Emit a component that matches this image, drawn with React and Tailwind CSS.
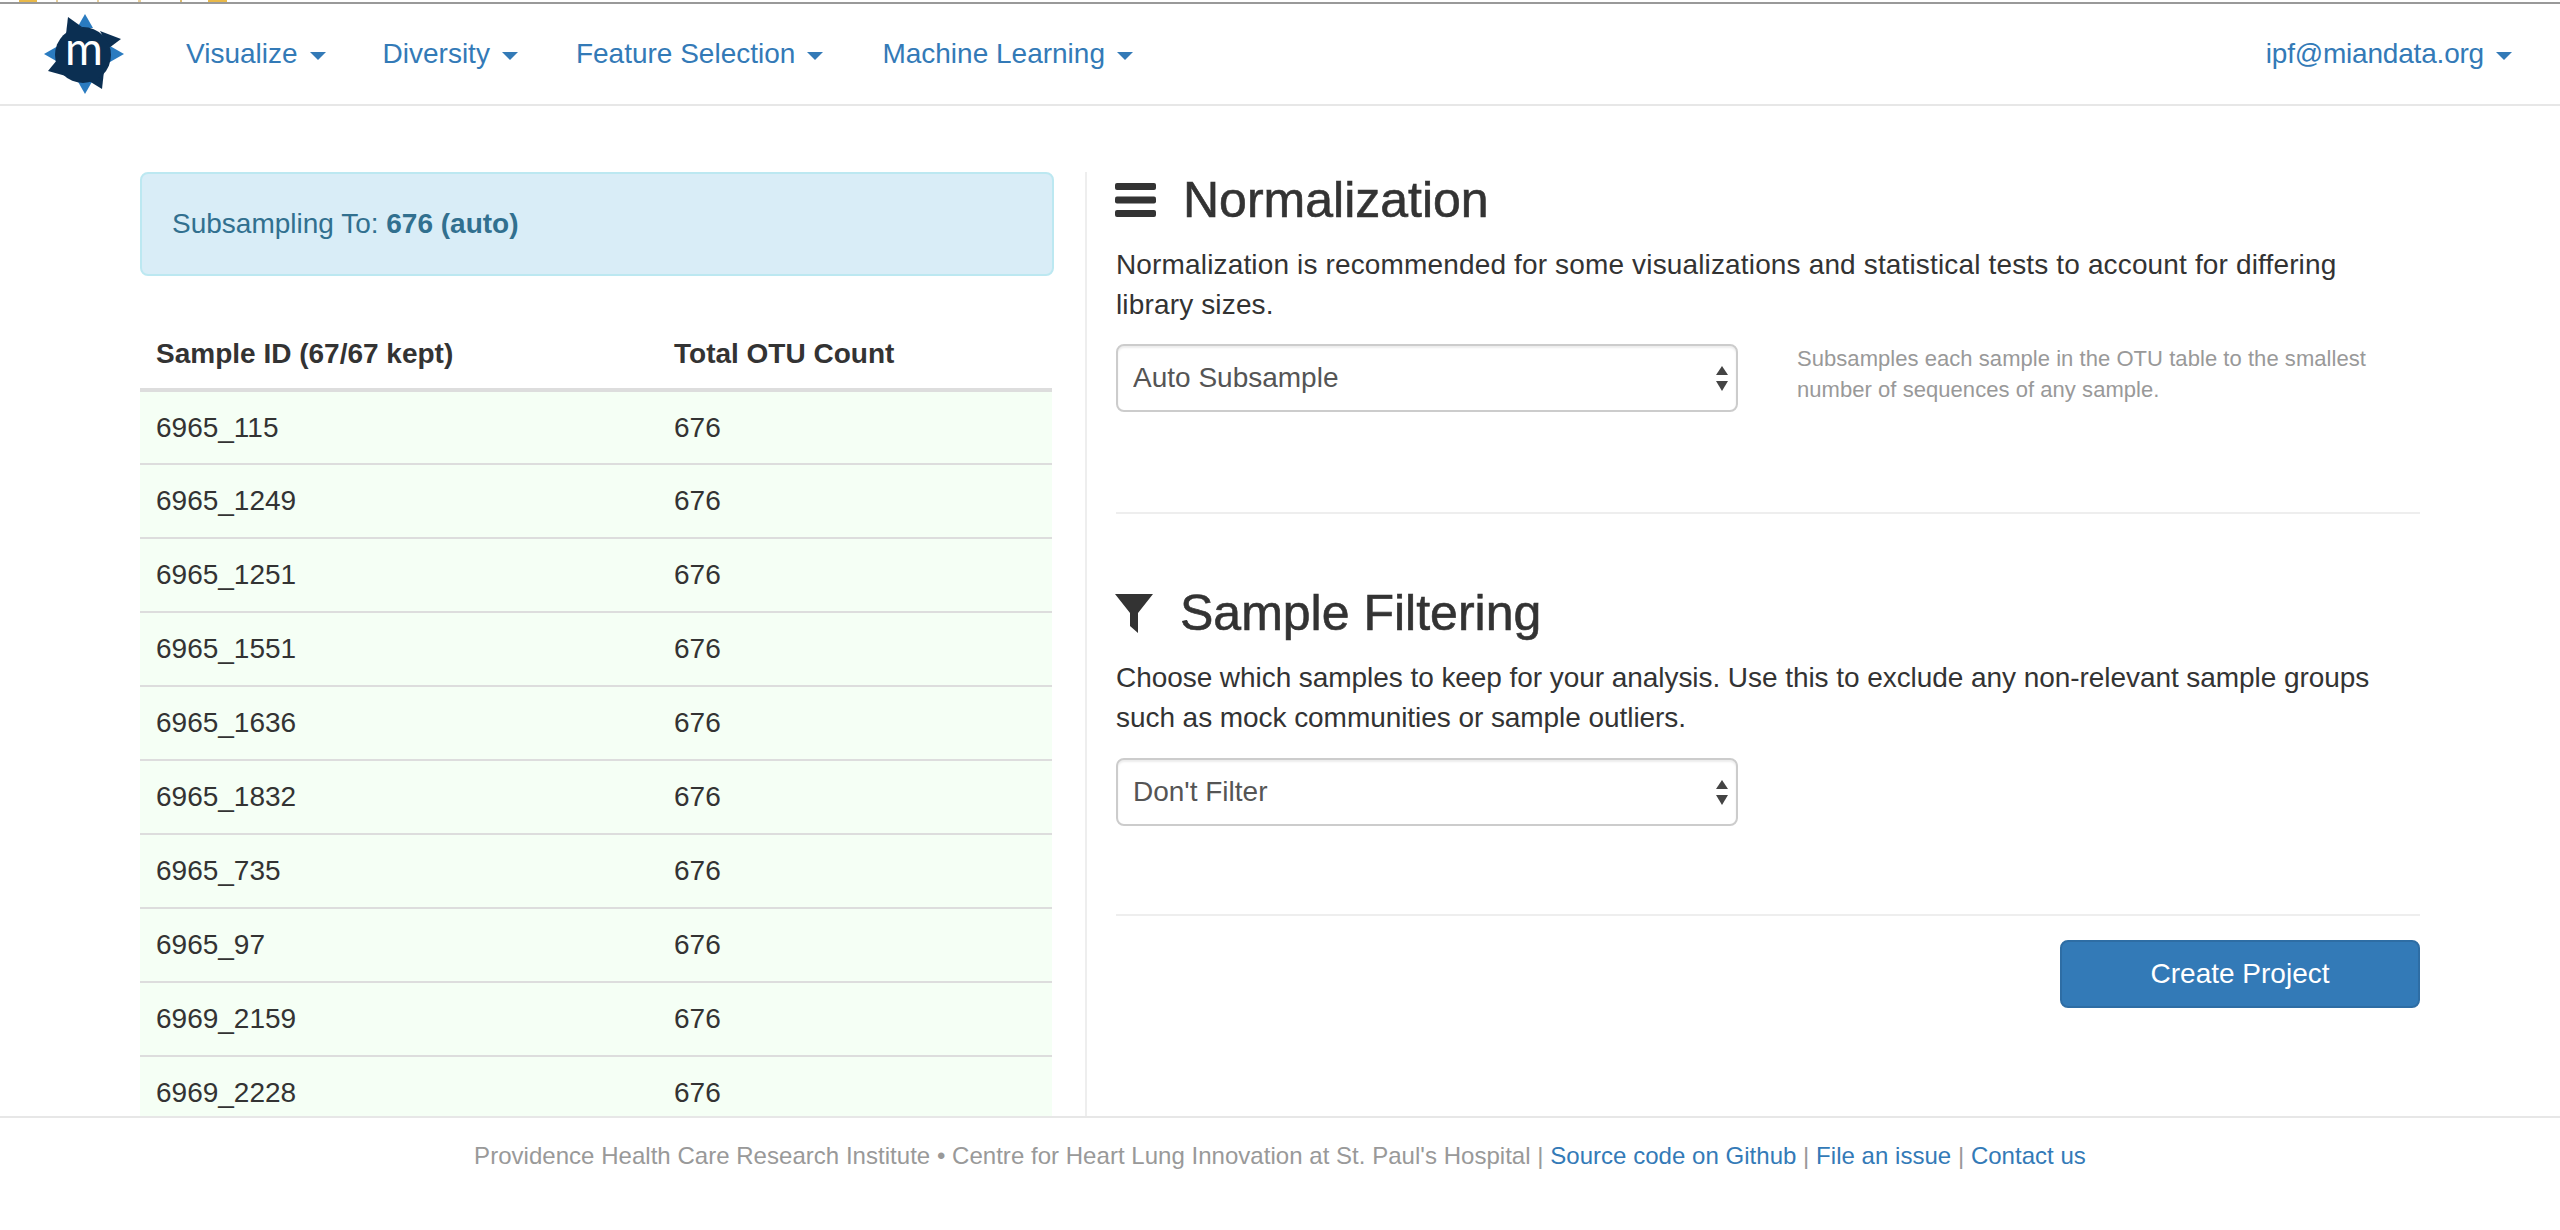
import React from "react";

const sans = "font-['Liberation_Sans',Arial,sans-serif]";

const rows = ["6965_115", "6965_1249", "6965_1251", "6965_1551", "6965_1636", "6965_1832", "6965_735", "6965_97", "6969_2159", "6969_2228"];

const Caret = () => (
  <span className="inline-block border-x-[8px] border-t-[8px] border-x-transparent border-t-[#337ab7] align-middle ml-[12px]"></span>
);

const Logo = () => (
  <svg width="80" height="80" viewBox="0 0 80 80">
    <polygon points="41,0 33,14 49,14" fill="#2a7bc0" />
    <polygon points="41,80 33,66 49,66" fill="#2a7bc0" />
    <polygon points="0,40 14,32 14,48" fill="#2a7bc0" />
    <polygon points="80,40 66,32 66,48" fill="#2a7bc0" />
    <polygon points="24,3 22,20 38,13" fill="#0b2f52" />
    <polygon points="77,25 56,17 65,34" fill="#0b2f52" />
    <polygon points="4,57 13,46 22,62" fill="#0b2f52" />
    <polygon points="58,75 45,67 60,57" fill="#0b2f52" />
    <circle cx="39" cy="41" r="28" fill="#0b2f52" />
    <text x="40" y="51" textAnchor="middle" fontFamily="Lato, sans-serif" fontSize="46" fill="#fff">m</text>
  </svg>
);

const NavLink = ({ label, className = "" }) => (
  <a className={"text-[#337ab7] text-[28px] leading-[40px] whitespace-nowrap " + className}>
    {label}
    <Caret />
  </a>
);

const Select = ({ value }) => (
  <div className="relative w-[622px] h-[68px]">
    <select defaultValue={value} className="appearance-none w-full h-full bg-white border-2 border-[#ccc] rounded-[8px] pl-[15px] text-[28px] text-[#555] shadow-[inset_0_2px_2px_rgba(0,0,0,0.075)]">
      <option>{value}</option>
    </select>
    <svg className="absolute right-[10px] top-[22px]" width="12" height="25" viewBox="0 0 12 25">
      <polygon points="6,0 12,9 0,9" fill="#444" />
      <polygon points="6,25 12,15 0,15" fill="#444" />
    </svg>
  </div>
);

export default function App() {
  return (
    <div className={sans + " h-[1230px] flex flex-col bg-white text-[#333] overflow-hidden"}>
      <div className="h-[4px] border-b-2 border-[#999] flex shrink-0">
        <span className="w-[18px] ml-[19px] bg-[#e9b949]"></span>
        <span className="w-[2px] ml-[19px] bg-[#e8cf9a]"></span>
        <span className="w-[2px] ml-[39px] bg-[#e8cf9a]"></span>
        <span className="w-[3px] ml-[39px] bg-[#e8cf9a]"></span>
        <span className="w-[2px] ml-[39px] bg-[#d9b96e]"></span>
        <span className="w-[19px] ml-[26px] bg-[#e9b949]"></span>
      </div>

      <nav className="h-[102px] shrink-0 border-b-2 border-[#e7e7e7] flex items-center pl-[44px] pr-[48px]">
        <Logo />
        <div className="flex ml-[62px] gap-[58px]">
          <NavLink label="Visualize" />
          <NavLink label="Diversity" className="-ml-[1px]" />
          <NavLink label="Feature Selection" />
          <NavLink label="Machine Learning" className="ml-[1px]" />
        </div>
        <NavLink label="ipf@miandata.org" className="ml-auto tracking-[-0.2px]" />
      </nav>

      <main className="flex-1 min-h-0 flex pt-[66px] pl-[140px] overflow-hidden">
        <div className="w-[914px] shrink-0">
          <div className="h-[104px] border-2 border-[#bce8f1] bg-[#d9edf7] rounded-[8px] text-[#31708f] text-[28px] flex items-center px-[30px]">
            <span>Subsampling To: <b>676 (auto)</b></span>
          </div>
          <table className="w-[912px] mt-[30px] text-[28px] border-collapse">
            <thead>
              <tr className="border-b-4 border-[#ddd] h-[84px]">
                <th className="text-left font-bold pl-[16px] pt-[13px] w-[518px]">Sample ID (67/67 kept)</th>
                <th className="text-left font-bold pl-[16px] pt-[13px]">Total OTU Count</th>
              </tr>
            </thead>
            <tbody>
              {rows.map((id) => (
                <tr key={id} className="h-[74px] bg-[#f5fff5] border-b-2 border-[#ddd]">
                  <td className="pl-[16px]">{id}</td>
                  <td className="pl-[16px]">676</td>
                </tr>
              ))}
            </tbody>
          </table>
        </div>

        <div className="ml-[31px] w-[1335px] border-l-2 border-[#eee] pl-[29px]">
          <div className="flex items-center h-[56px]">
            <svg className="-ml-[1px]" width="41" height="34" viewBox="0 0 41 34">
              <rect x="0" y="0" width="41" height="7" rx="2" fill="#333" />
              <rect x="0" y="13.5" width="41" height="7" rx="2" fill="#333" />
              <rect x="0" y="27" width="41" height="7" rx="2" fill="#333" />
            </svg>
            <h2 className="text-[50px] ml-[27px] leading-[56px] [-webkit-text-stroke:0.6px_#333]">Normalization</h2>
          </div>
          <p className="mt-[17px] text-[28px] leading-[40px] tracking-[0.15px]">
            Normalization is recommended for some visualizations and statistical tests to account for differing<br />library sizes.
          </p>
          <div className="flex mt-[19px]">
            <Select value="Auto Subsample" />
            <p className="ml-[59px] -mt-[1px] text-[22px] leading-[31px] tracking-[0.05px] text-[#999] w-[600px]">
              Subsamples each sample in the OTU table to the smallest number of sequences of any sample.
            </p>
          </div>
          <div className="h-[2px] bg-[#eee] mt-[100px]"></div>

          <div className="flex items-center h-[56px] mt-[71px]">
            <svg className="-ml-[1px]" width="38" height="39" viewBox="0 0 38 39">
              <polygon points="0,0 38,0 23,19 23,39 15,32 15,19" fill="#333" />
            </svg>
            <h2 className="text-[50px] ml-[27px] leading-[56px] [-webkit-text-stroke:0.6px_#333]">Sample Filtering</h2>
          </div>
          <p className="mt-[17px] text-[28px] leading-[40px] tracking-[-0.06px]">
            Choose which samples to keep for your analysis. Use this to exclude any non-relevant sample groups<br />such as mock communities or sample outliers.
          </p>
          <div className="mt-[20px]">
            <Select value="Don't Filter" />
          </div>
          <div className="h-[2px] bg-[#eee] mt-[88px]"></div>
          <div className="flex justify-end mt-[24px]">
            <button className="w-[360px] h-[68px] bg-[#337ab7] border-2 border-[#2e6da4] rounded-[8px] text-white text-[28px]">Create Project</button>
          </div>
        </div>
      </main>

      <footer className="h-[114px] shrink-0 border-t-2 border-[#e7e7e7] text-center pt-[18px] text-[24px] leading-[40px] tracking-[0.03px] text-[#999]">
        Providence Health Care Research Institute • Centre for Heart Lung Innovation at St. Paul's Hospital | <a className="text-[#337ab7]">Source code on Github</a> | <a className="text-[#337ab7]">File an issue</a> | <a className="text-[#337ab7]">Contact us</a>
      </footer>
    </div>
  );
}
